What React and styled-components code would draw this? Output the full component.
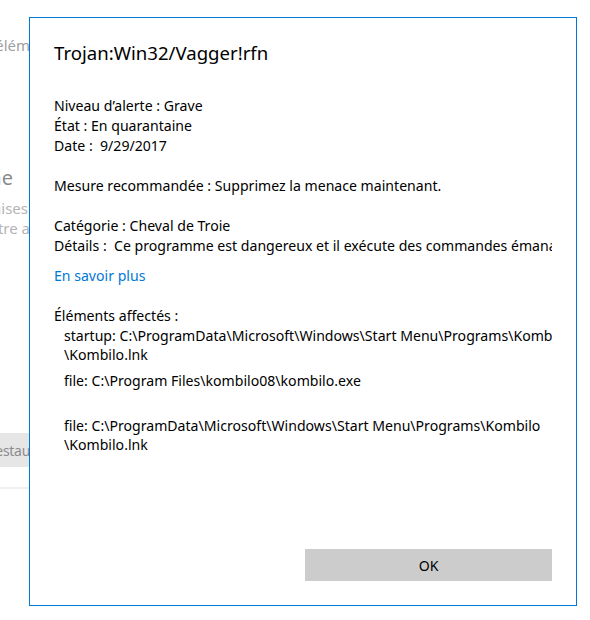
import React from "react";
import styled, { createGlobalStyle } from "styled-components";

const threat = {
  name: "Trojan:Win32/Vagger!rfn",
  alert: "Grave",
  state: "En quarantaine",
  date: "9/29/2017",
  action: "Supprimez la menace maintenant.",
  category: "Cheval de Troie",
  details:
    "Ce programme est dangereux et il exécute des commandes émanant d’un attaquant.",
};

// each item is split where Windows breaks the path
let affected = [
  [
    "startup: C:\\ProgramData\\Microsoft\\Windows\\Start Menu\\Programs\\Kombilo",
    "\\Kombilo.lnk",
  ],
  ["file: C:\\Program Files\\kombilo08\\kombilo.exe"],
  [
    "file: C:\\ProgramData\\Microsoft\\Windows\\Start Menu\\Programs\\Kombilo",
    "\\Kombilo.lnk",
  ],
];

// settings page peeking out from behind the dialog
const backdrop = [
  { text: "Afficher l’historique complet des élém", top: 35, size: 15, inset: 0, tone: "#a0a0a0" },
  { text: "Menaces en quarantaine", top: 113, size: 20, inset: 17, tone: "#8a8a8a" },
  { text: "Les menaces en quarantaine ont été isolées et ne sont plus mises", top: 10, size: 15, inset: 2, tone: "#b4b4b4" },
  { text: "en mesure de s’exécuter sur votre a", top: 0, size: 15, inset: 0, tone: "#b4b4b4" },
];

const GlobalStyle = createGlobalStyle`
  html, body {
    margin: 0;
    padding: 0;
    background: #fff;
  }
  body {
    font-family: "Segoe UI", "Noto Sans", sans-serif;
  }
`;

const App = () => {
  return (
    <Screen>
      <GlobalStyle />

      <Backdrop>
        {backdrop.map((line) => (
          <BackLine
            key={line.text}
            top={line.top}
            size={line.size}
            inset={line.inset}
            tone={line.tone}
          >
            <span>{line.text}</span>
          </BackLine>
        ))}
        <BackButton>
          <span>Restau</span>
        </BackButton>
        <BackRule />
      </Backdrop>

      <Dialog>
        <Title>{threat.name}</Title>

        <Section>
          <Line>Niveau d’alerte : {threat.alert}</Line>
          <Line>État : {threat.state}</Line>
          <Line>Date :&nbsp; {threat.date}</Line>
        </Section>

        <Section>
          <Line>Mesure recommandée : {threat.action}</Line>
        </Section>

        <Section>
          <Line>Catégorie : {threat.category}</Line>
          <Line>Détails :&nbsp; {threat.details}</Line>
          <Link href="#">En savoir plus</Link>
        </Section>

        <Section>
          <Line>Éléments affectés :</Line>
          <Paths>
            {affected.map((item, i) => (
              <PathItem key={i}>
                {item.map((part) => (
                  <PathLine key={part}>{part}</PathLine>
                ))}
              </PathItem>
            ))}
          </Paths>
        </Section>

        <Footer>
          <OkButton>OK</OkButton>
        </Footer>
      </Dialog>
    </Screen>
  );
};

// Screen

const Screen = styled.div`
  position: relative;
  width: 590px;
  height: 620px;
  overflow: hidden;
  background: #fff;
`;

// Backdrop

const Backdrop = styled.div`
  display: flex;
  flex-direction: column;
  width: 30px;
  overflow: hidden;
`;
const BackLine = styled.div`
  display: flex;
  justify-content: flex-end;
  margin-top: ${(p) => p.top}px;
  padding-right: ${(p) => p.inset}px;
  color: ${(p) => p.tone};
  font-size: ${(p) => p.size}px;
  line-height: 20px;
  white-space: nowrap;
`;
const BackButton = styled.div`
  display: flex;
  justify-content: flex-end;
  align-items: center;
  margin-top: 195px;
  height: 34px;
  background: #e6e6e6;
  color: #8c8c8c;
  font-size: 14px;
  letter-spacing: -0.3px;
  white-space: nowrap;
`;
const BackRule = styled.div`
  margin-top: 20px;
  height: 2px;
  background: #f0f0f0;
`;

// Dialog

const Dialog = styled.div`
  position: absolute;
  left: 29px;
  top: 17px;
  width: 548px;
  height: 589px;
  box-sizing: border-box;
  display: flex;
  flex-direction: column;
  padding: 21px 24px 24px 24px;
  border: 1px solid #0078d7;
  background: #fff;
  color: #000;
`;
const Title = styled.div`
  font-size: 18.6px;
  line-height: 28px;
  margin-bottom: 29px;
`;
const Section = styled.div`
  display: flex;
  flex-direction: column;
  margin-bottom: 20px;
  overflow: hidden;
`;
const Line = styled.div`
  font-size: 14.1px;
  line-height: 20px;
  white-space: nowrap;
`;
const Link = styled.a`
  margin-top: 10px;
  color: #0078d7;
  font-size: 14.1px;
  line-height: 20px;
  text-decoration: none;
  align-self: flex-start;
`;
const Paths = styled.div`
  display: flex;
  flex-direction: column;
  gap: 6px;
  padding-left: 10px;
`;
const PathItem = styled.div`
  min-height: 39px;
`;
const PathLine = styled.div`
  font-size: 14.1px;
  line-height: 19px;
  white-space: nowrap;
`;

// Footer

const Footer = styled.div`
  display: flex;
  justify-content: flex-end;
  margin-top: auto;
`;
const OkButton = styled.button`
  width: 247px;
  height: 32px;
  border: none;
  background: #cccccc;
  color: #000;
  font-family: inherit;
  font-size: 14.1px;
  cursor: pointer;
`;

export default App;
